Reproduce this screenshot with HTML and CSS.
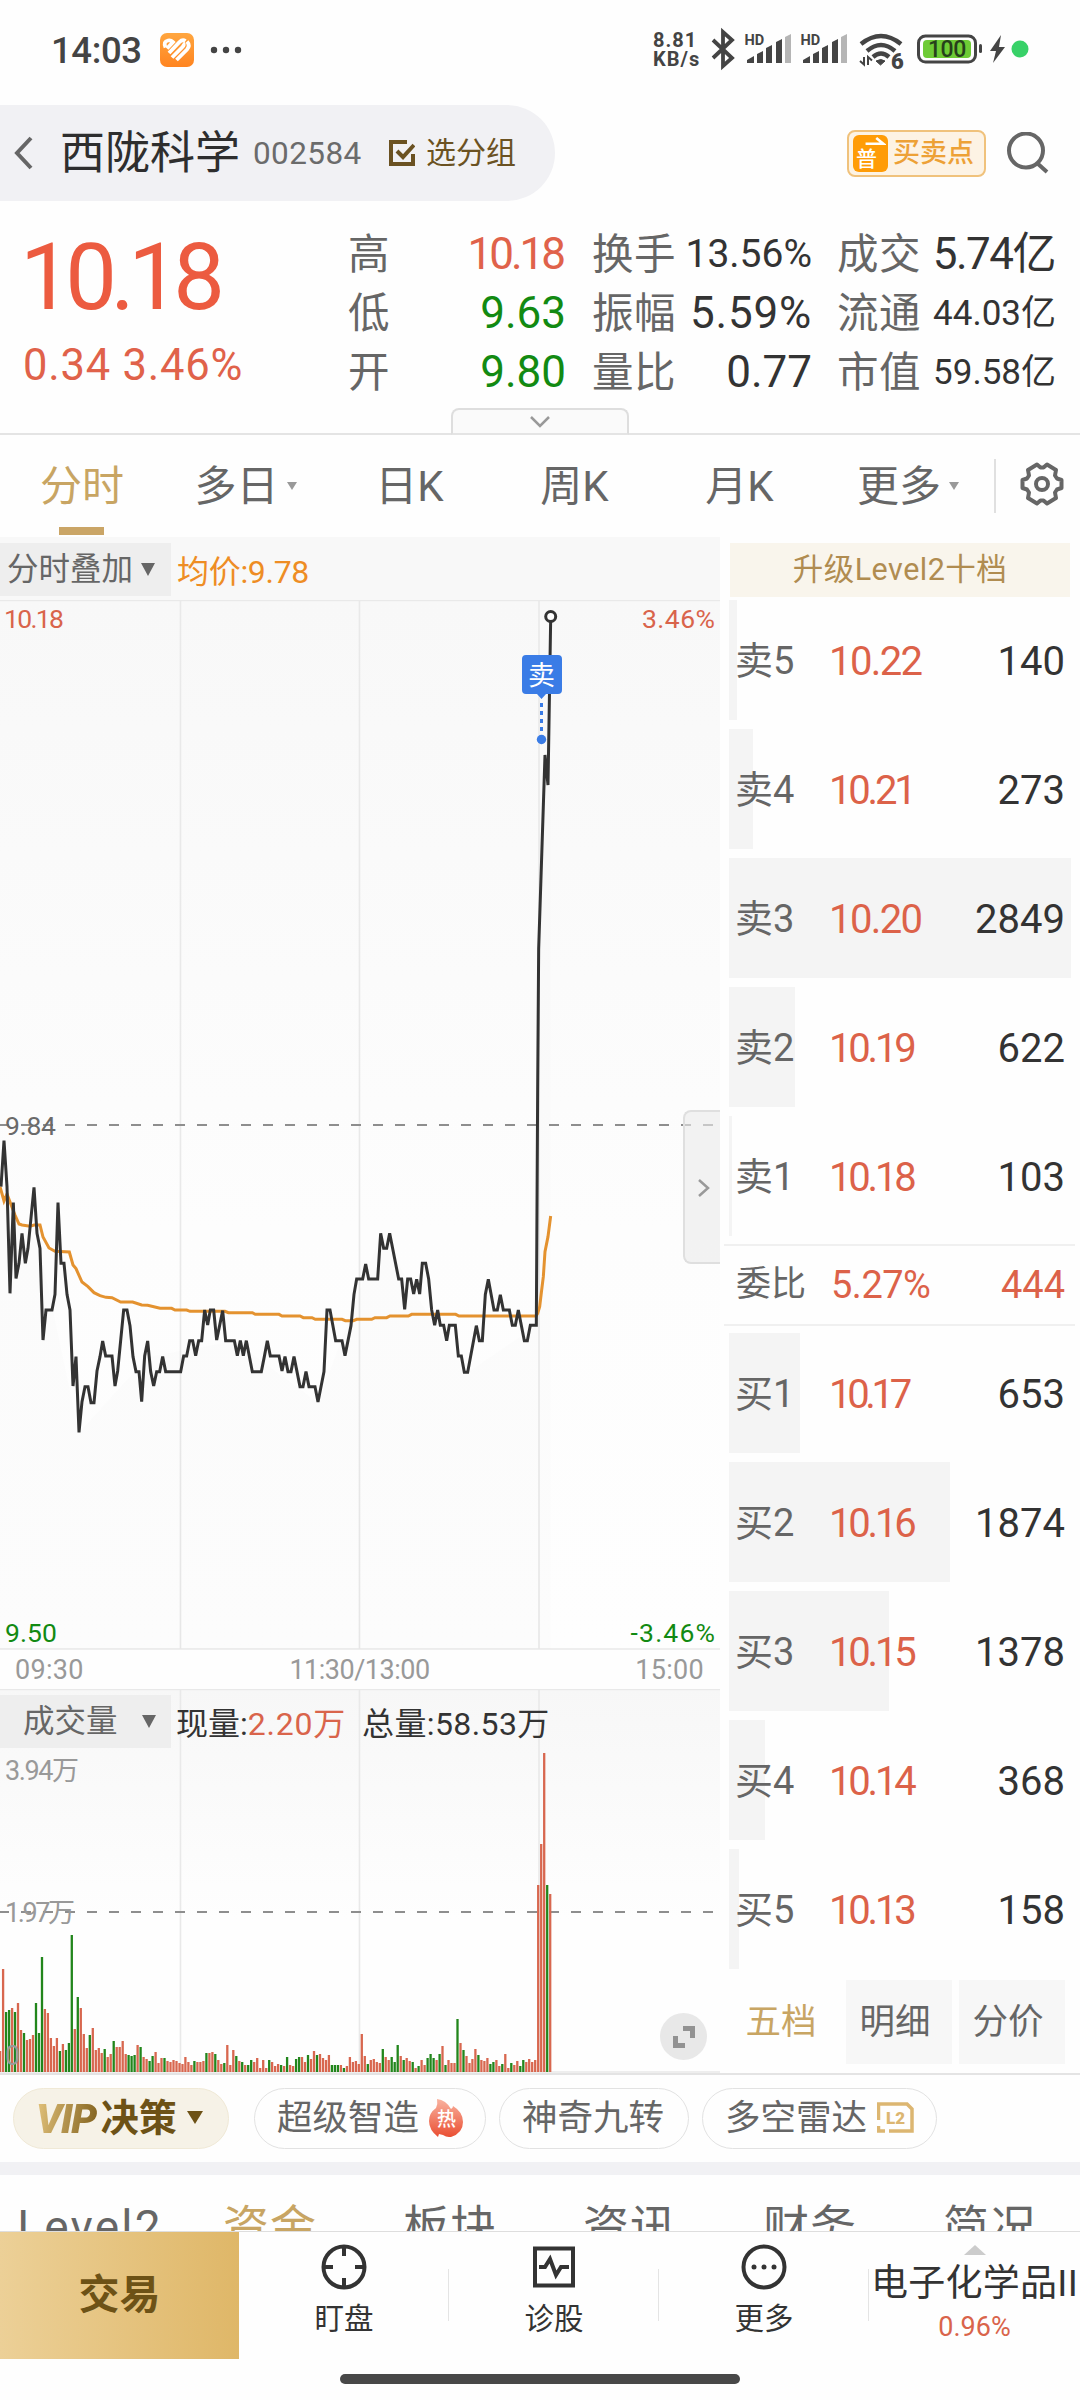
FILE: index.html
```html
<!DOCTYPE html>
<html lang="zh-CN">
<head>
<meta charset="utf-8">
<title>西陇科学 002584</title>
<link rel="stylesheet" href="styles.css">
</head>
<body>
<div class="status">
  <span class="clock">14:03</span>
  <svg class="app-icon" viewBox="0 0 34 34"><defs><linearGradient id="og" x1="0" y1="0" x2="0" y2="1"><stop offset="0" stop-color="#ffa63f"/><stop offset="1" stop-color="#ff8420"/></linearGradient></defs><rect width="34" height="34" rx="7" fill="url(#og)"/><g fill="none" stroke="#fff" stroke-width="3.800"><path d="M5.500 14.500Q3 8.500 8 7.500q3-.5 5 1.500L7 15.500"/><path d="M9 20 19.500 9q3-3 6-1"/><path d="M12 24.500 22 14.500q3-3 1-4.500"/><path d="M16.500 27 27 16.500q3.500-4 0-8"/></g></svg>
  <svg class="dots" viewBox="0 0 32 8"><circle cx="4" cy="4" r="3.2"/><circle cx="16" cy="4" r="3.2"/><circle cx="28" cy="4" r="3.2"/></svg>
  <div class="speed"><span>8.81</span><span>KB/s</span></div>
  <svg class="status-icons" viewBox="705 28 330 46">
    <path d="M713 41l19 18-9 8V33l9 8-19 18" fill="none" stroke="#444" stroke-width="3.8"/>
    <g id="sig"><text x="744.500" y="46" class="hd">HD</text><path d="M747 64v-3l7-4v7zM757 64V55l6-3v12zM766 64V49l6-3v18zM776 64V43l6-3v24z" fill="#444"/><path d="M785 64V38l6-3v29z" fill="#b5b5b5"/></g>
    <use href="#sig" x="56"/>
    <g fill="none" stroke="#444" stroke-width="4.4"><path d="M861 45q20-16 40 0M867 52q14-12 28 0M873 58q8-7 16 0"/></g>
    <path d="M876 62q5-3 9 0l-4.500 4z" fill="#444" stroke="#444"/>
    <path d="M860 62l4 3.500V58M868 66v-8l4 3.500" fill="none" stroke="#444" stroke-width="2"/>
    <text x="891" y="69.500" class="six">6</text>
    <rect x="918.500" y="37" width="57" height="26" rx="7" fill="none" stroke="#444" stroke-width="3"/><rect x="923" y="41" width="48" height="18" rx="4" fill="#6ecb35"/><rect x="979" y="45" width="3" height="9" rx="1.500" fill="#444"/>
    <text x="928" y="58" class="bat">100</text>
    <path d="M1001 36l-11 16h6l-3 12 12-16h-6z" fill="#444"/><circle cx="1020" cy="50" r="8.500" fill="#38d168"/>
  </svg>
</div>

<header class="header">
  <div class="stock">
    <svg class="back" viewBox="0 0 20 34"><path d="M17 2 3 17l14 15"/></svg>
    <h1>西陇科学</h1><span class="code">002584</span>
    <svg class="check" viewBox="0 0 26 26"><path d="M18 2H2v22h22V14"/><path d="m8 11 6 6L25 5"/></svg>
    <span class="group">选分组</span>
  </div>
  <div class="trade-points">
    <span class="pu"><svg viewBox="0 0 36 14"><path d="M13 9.500h20L25 3" fill="none" stroke="#fff" stroke-width="3"/></svg>普</span>
    <span>买卖点</span>
  </div>
  <svg class="search" viewBox="0 0 42 42"><circle cx="19" cy="18.500" r="17"/><path d="m30 31 10 9"/></svg>
</header>

<section class="quote">
  <div class="price"><strong>10.18</strong><span>0.34 3.46%</span></div>
  <dl class="stats">
    <dt>高</dt><dd class="red t3">10.18</dd><dt>换手</dt><dd class="s39">13.56%</dd><dt>成交</dt><dd class="t2">5.74亿</dd>
    <dt>低</dt><dd class="green">9.63</dd><dt>振幅</dt><dd class="wide">5.59%</dd><dt>流通</dt><dd class="s35">44.03亿</dd>
    <dt>开</dt><dd class="green">9.80</dd><dt>量比</dt><dd>0.77</dd><dt>市值</dt><dd class="s35">59.58亿</dd>
  </dl>
  <div class="expander"><svg viewBox="0 0 20 12"><path d="m1 1 9 9 9-9"/></svg></div>
</section>

<nav class="periods">
  <span class="on">分时</span><span>多日<i></i></span><span>日K</span><span>周K</span><span>月K</span><span>更多<i></i></span>
  <div class="gear"><svg viewBox="-22 -22 44 44"><path d="M-5-19.500-1.500-16.500h3L5-19.500 14-14l-1 5.500 2 3 4.500 1.500v8L15 5.500l-2 3 1 5.500-9 5.500-3.500-3h-3l-3.500 3-9-5.500 1-5.500-2-3L-19.500 4v-8l4.500-1.500 2-3-1-5.500z"/><circle r="6"/></svg></div>
</nav>

<main class="main">
  <div class="charts">
    <div class="bar"><span class="select">分时叠加<i></i></span><span class="avg">均价:9.78</span></div>
    <div class="plot">
      <svg viewBox="0 0 720 1050">
        <g class="grid"><path d="M0 .5H720M180.500 0V1049M359.500 0V1049M539 0V1049M0 1049H720"/></g>
        <path class="dash" d="M0 525H714"/>
        <g transform="translate(0 490) scale(.33333)">
          <path class="shade" d="M0 290 120 475 237 1027 443 800 703 752 954 936 1142 430 1304 706 1403 847 1609 706 1616-423 1652-1411V1677H0z"/>
          <path class="avgline" d="M0 290 12 333 21 312 36 352 45 375 57 402 66 405 90 409 102 405 120 405 129 441 147 474 165 484 208 486 219 525 228 536 246 576 264 590 282 608 300 617 318 622 336 623 362 636 398 636 425 645 443 646 480 655 515 655 525 660 560 660 570 664 675 664 685 668 757 668 766 673 837 673 846 678 900 678 910 683 936 683 946 688 1026 688 1036 692 1060 692 1070 688 1115 688 1125 683 1160 683 1170 678 1225 678 1235 673 1367 673 1377 678 1608 678 1613 670 1619 650 1625 600 1630 560 1635 485 1644 440 1652 378"/>
          <path class="line" d="M3 290 12 152 21 290 30 610 40 338 48 565 57 520 66 430 76 520 84 475 102 292 111 430 120 475 129 750 138 660 156 660 165 613 174 338 183 520 192 520 201 613 210 660 219 888 228 800 237 1027 246 935 255 890 264 890 273 938 282 938 291 843 300 800 308 753 317 798 336 798 345 888 353 843 371 660 381 660 390 707 399 800 408 845 417 845 425 935 434 798 443 753 452 845 461 888 470 845 479 845 488 800 497 845 542 845 551 798 560 798 569 752 578 752 587 797 596 752 605 752 614 660 623 705 631 660 641 660 650 750 668 662 677 752 703 752 712 797 721 752 730 797 739 752 757 845 784 845 793 800 802 752 811 798 837 798 846 843 855 800 864 845 873 845 882 800 900 890 909 890 918 845 927 890 945 890 954 936 972 845 981 660 990 660 1007 752 1026 752 1035 797 1053 707 1062 613 1070 567 1088 567 1097 522 1106 567 1133 567 1142 430 1151 475 1160 475 1169 430 1196 567 1205 567 1214 658 1223 567 1232 567 1241 612 1250 568 1259 612 1267 520 1277 520 1286 567 1295 660 1304 706 1313 660 1321 706 1331 706 1340 752 1348 706 1366 706 1375 798 1384 798 1393 847 1403 847 1429 707 1438 752 1447 752 1456 613 1465 568 1482 660 1492 660 1501 614 1510 660 1528 660 1537 706 1546 706 1555 660 1573 752 1582 752 1591 706 1609 706 1613 0 1616-423 1635-1005 1644-915 1652-1411"/>
        </g>
        <circle cx="550.700" cy="16.500" r="5" fill="#fff" stroke="#333" stroke-width="3"/>
        <path d="M526 55h32q4 0 4 4v31q0 4-4 4h-12l-4.500 5-4.500-5h-11q-4 0-4-4V59q0-4 4-4z" fill="#3a7ce6"/>
        <path d="M541.500 103v30" stroke="#3a7ce6" stroke-width="3" stroke-dasharray="4 4"/><circle cx="541.500" cy="139.500" r="4.700" fill="#3a7ce6"/>
        <text x="528" y="85" class="sell">卖</text>
        <text x="4" y="28" class="lab red" textLength="60">10.18</text><text x="642" y="28" class="lab red" textLength="73">3.46%</text>
        <text x="5" y="535" class="lab" textLength="51">9.84</text>
        <text x="5" y="1042" class="lab green" textLength="52">9.50</text><text x="630.500" y="1042" class="lab green" textLength="84.500">-3.46%</text>
      </svg>
      <div class="handle"><svg viewBox="0 0 12 18"><path d="m1 1 9 8-9 8"/></svg></div>
    </div>
    <div class="axis"><span>09:30</span><span class="mid">11:30/13:00</span><span>15:00</span></div>
    <div class="volume">
      <svg id="vol" viewBox="0 0 720 384">
        <path class="grid" d="M0 .5H720M180.500 0V383M359.500 0V383M539 0V383M0 383H720"/>
        <path class="dash" d="M0 223H714"/>
        <g id="bars"></g>
        <text x="5" y="91" class="lab g9" textLength="74">3.94万</text><text x="5" y="233" class="lab g9" textLength="70">1.97万</text><text x="5" y="376" class="lab g9">0</text>
      </svg>
      <div class="bar"><span class="select vol">成交量<i></i></span><span class="now">现量:<b>2.20万</b></span><span class="total">总量:58.53万</span></div>
      <div class="full"><svg viewBox="0 0 22 22"><path d="M10 2.500h9.500V12M2.500 10v9.500H12"/></svg></div>
    </div>
  </div>

  <aside class="book">
    <div class="upgrade">升级Level2十档</div>
    <div class="rows">
      <div class="row"><u style="width:8px"></u><span>卖5</span><em class="a">10.22</em><b>140</b></div>
      <div class="row"><u style="width:24px"></u><span>卖4</span><em class="b">10.21</em><b>273</b></div>
      <div class="row"><u style="width:342px"></u><span>卖3</span><em class="a">10.20</em><b>2849</b></div>
      <div class="row"><u style="width:66px"></u><span>卖2</span><em class="b">10.19</em><b>622</b></div>
      <div class="row"><u style="width:3px"></u><span>卖1</span><em class="b">10.18</em><b>103</b></div>
    </div>
    <div class="ratio"><span>委比</span><em>5.27%</em><b>444</b></div>
    <div class="rows">
      <div class="row"><u style="width:71px"></u><span>买1</span><em class="c">10.17</em><b>653</b></div>
      <div class="row"><u style="width:221px"></u><span>买2</span><em class="b">10.16</em><b>1874</b></div>
      <div class="row"><u style="width:160px"></u><span>买3</span><em class="b">10.15</em><b>1378</b></div>
      <div class="row"><u style="width:36px"></u><span>买4</span><em class="b">10.14</em><b>368</b></div>
      <div class="row"><u style="width:10px"></u><span>买5</span><em class="b">10.13</em><b>158</b></div>
    </div>
    <div class="modes"><span class="on">五档</span><span>明细</span><span>分价</span></div>
  </aside>
</main>

<div class="tools">
  <span class="pill vip"><b>VIP</b>决策<i></i></span>
  <span class="pill p2">超级智造<svg class="flame" viewBox="0 0 34 38"><defs><linearGradient id="fg" x1="0" y1="0" x2="0" y2="1"><stop offset="0" stop-color="#f9b3a0"/><stop offset="1" stop-color="#ea4f33"/></linearGradient></defs><path d="M8 0q9 1 14 10 2-1 2-3 10 6 10 16 0 11-12 15H20q-3 0-6-2l-4-1-1 3Q0 31 0 22q0-8 7-13 2-4 1-9z" fill="url(#fg)"/><text x="8" y="27">热</text></svg></span>
  <span class="pill p3">神奇九转</span>
  <span class="pill p4">多空雷达<svg class="l2" viewBox="0 0 37 31"><path d="M1.500 18V2H30l5 5v22H12M1.500 24v5H8" fill="none" stroke="#dcb671" stroke-width="3.500"/><text x="9" y="22">L2</text></svg></span>
</div>
<div class="band"></div>
<nav class="sections"><span class="lv">Level2</span><span class="on">资金</span><span>板块</span><span>资讯</span><span>财务</span><span>简况</span></nav>

<footer class="bottom">
  <div class="trade">交易</div>
  <div class="item"><svg viewBox="0 0 46 46"><circle cx="23" cy="23" r="20.500"/><path d="M23 3v9M23 34v9M3 23h9M34 23h9"/></svg>盯盘</div>
  <div class="item"><svg viewBox="0 0 46 46"><path d="M4 4.500h38v37H4zM8 23h6l5-8 6 16 5-8h8"/></svg>诊股</div>
  <div class="item"><svg viewBox="0 0 46 46"><circle cx="23" cy="23" r="20.500"/><g class="fill"><circle cx="13" cy="23" r="2.500"/><circle cx="23" cy="23" r="2.500"/><circle cx="33" cy="23" r="2.500"/></g></svg>更多</div>
  <div class="industry"><i></i><span>电子化学品II</span><em>0.96%</em></div>
</footer>
<div class="home"><i></i></div>
<script src="volume.js"></script>
</body>
</html>
```
FILE: styles.css
```css
* { box-sizing: border-box; margin: 0; padding: 0; }
body { width: 1080px; height: 2400px; overflow: hidden; background: #fefefe; color: #333; font-family: Roboto, "Noto Sans CJK SC", sans-serif; display: flex; flex-direction: column; }
body > * { flex: none; }
i, em { font-style: normal; }
b, strong { font-weight: 400; }
svg { display: block; flex: none; }
span, dt, dd, em, b { white-space: nowrap; }
.red { color: #e0624a; fill: #d9644b; }
.green { color: #128a12; fill: #128a12; }

.status { height: 105px; padding: 0 45px 5px 51px; display: flex; align-items: center; }
.clock { width: 109px; font-size: 36.500px; font-weight: 500; color: #444; letter-spacing: -.4px; }
.app-icon { width: 34px; height: 34px; margin-right: 16px; }
.dots { width: 32px; height: 8px; fill: #444; }
.speed { margin-left: auto; width: 52px; display: flex; flex-direction: column; font-size: 20px; line-height: 19px; font-weight: 700; color: #444; letter-spacing: 1px; }
.status-icons { width: 330px; height: 46px; }
.hd { font-size: 14.500px; font-weight: 700; fill: #444; }
.six { font-size: 22px; font-weight: 900; fill: #444; }
.bat { font-size: 23px; font-weight: 500; fill: #26401b; letter-spacing: -.5px; }

.header { height: 96px; display: flex; align-items: center; }
.stock { width: 555px; height: 96px; background: #f1f1f4; border-radius: 0 48px 48px 0; display: flex; align-items: center; padding-left: 14px; }
.back { width: 20px; height: 34px; fill: none; stroke: #666; stroke-width: 4; margin-right: 26px; }
h1 { font-size: 45px; line-height: 60px; font-weight: 400; width: 193px; color: #2e2e2e; padding-top: 1px; }
.code { font-size: 31.500px; width: 136px; color: #6b6b6b; letter-spacing: .4px; }
.check { width: 26px; height: 26px; fill: none; stroke: #6b5222; stroke-width: 4; margin-right: 11px; }
.group { font-size: 30px; line-height: 40px; color: #6b5222; padding-bottom: 1px; }
.trade-points { margin-left: 292px; width: 139px; height: 47px; border: 2px solid #f0c27c; border-radius: 8px; background: #fdf3e4; display: flex; align-items: center; gap: 5px; padding-left: 4px; font-size: 27px; color: #eda136; line-height: 40px; font-weight: 500; }
.pu { width: 35px; height: 37px; border-radius: 6px; background: #ff9c07; color: #fff; font-size: 21px; line-height: 22px; padding-left: 3px; }
.pu svg { width: 32px; height: 13px; margin-left: -2px; }
.search { width: 42px; height: 42px; margin-left: 21px; fill: none; stroke: #666; stroke-width: 4; }

.quote { height: 234px; border-bottom: 2px solid #e4e4e4; position: relative; display: flex; }
.price { width: 348px; padding: 23px 0 0 20px; display: flex; flex-direction: column; color: #e0624a; }
.price strong { font-size: 92px; line-height: 108px; letter-spacing: -6.500px; color: #ec5b40; }
.price span { font-size: 43.500px; line-height: 52px; margin-top: 8px; letter-spacing: .8px; padding-left: 3px; }
.stats { display: grid; padding-top: 23.500px; grid-template-rows: repeat(3, 59.300px); grid-template-columns: 80px 138px 107px 139px 90px 154px; height: 200px; }
.stats dt { font-size: 41.500px; line-height: 59px; color: #666; letter-spacing: .5px; }
.stats dt:nth-of-type(3n+2) { padding-left: 26px; }
.stats dt:nth-of-type(3n) { padding-left: 25px; }
.stats dd { font-size: 44px; line-height: 59px; display: flex; justify-content: flex-end; }
.stats .t3 { letter-spacing: -3px; padding-right: 3px; }
.stats .t2 { letter-spacing: -1.500px; padding-right: 1px; }
.stats .wide { letter-spacing: .8px; }
.stats .s39 { font-size: 39px; }
.stats .s35 { font-size: 35px; }
.expander { position: absolute; left: 451px; bottom: -2px; width: 178px; height: 27px; border: 2px solid #dedede; border-bottom-color: #e4e4e4; border-radius: 8px 8px 0 0; background: #fafafa; display: flex; justify-content: center; padding-top: 6px; }
.expander svg { width: 20px; height: 12px; fill: none; stroke: #999; stroke-width: 2.500; }

.periods { height: 102px; display: grid; grid-template-columns: 164px 163px 165px 165px 165px 172px 86px; font-size: 42px; line-height: 103px; color: #666; }
.periods span { text-align: center; position: relative; }
.periods span.on { color: #c8a563; }
.periods span.on::after { content: ""; position: absolute; left: 59px; top: 92px; width: 45px; height: 8px; background: #caa566; }
.periods i { display: inline-block; border: 5.500px solid transparent; border-top: 8px solid #999; border-bottom: 0; margin-left: 8px; vertical-align: 11px; }
.gear { border-left: 2px solid #e0e0e0; height: 54px; margin-top: 24px; padding: 3px 0 0 23px; }
.gear svg { width: 46px; height: 44px; fill: none; stroke: #666; stroke-width: 4; stroke-linejoin: round; }

.main { height: 1536px; display: flex; }
.charts { width: 720px; background: #f8f8f8; }
.bar { height: 63px; display: flex; align-items: center; padding-top: 1px; font-size: 32px; }
.select { width: 171px; height: 53px; background: #eee; color: #666; font-size: 31.500px; line-height: 53px; padding-left: 7px; margin-right: 6px; display: flex; align-items: center; }
.select i, .vip i { border: 7px solid transparent; border-top: 13px solid #666; border-bottom: 0; margin-left: 8px; }
.avg { color: #ee8d24; letter-spacing: -.3px; }
.plot { height: 1050px; position: relative; background: linear-gradient(#f8f8f8, #fdfdfd 60%, #fefefe); }
.plot > svg { width: 720px; height: 1050px; }
.grid { fill: none; stroke: #e9e9e9; stroke-width: 1.600; }
.dash { stroke: #8e8e8e; stroke-width: 2; stroke-dasharray: 10 12; stroke-dashoffset: 1; }
.shade { fill: rgba(0,0,0,.008); }
.avgline { fill: none; stroke: #e4922f; stroke-width: 9; }
.line { fill: none; stroke: #333; stroke-width: 9; }
.sell { font-size: 27px; fill: #fff; }
.lab { font-size: 26.500px; }
.lab:not(.red):not(.green) { fill: #6a6a6a; }
.lab.g9:not(.red) { fill: #999; font-size: 27px; }
.handle { position: absolute; right: 0; top: 510px; width: 37px; height: 154px; border: 2px solid #dfdfdf; border-right: 0; border-radius: 8px 0 0 8px; background: rgba(235,235,235,.6); padding: 67px 0 0 13px; }
.handle svg { width: 12px; height: 18px; fill: none; stroke: #999; stroke-width: 2.500; }
.axis { height: 39px; background: #fefefe; display: flex; justify-content: space-between; align-items: center; padding: 0 16px 0 15px; color: #999; font-size: 27px; letter-spacing: .3px; }
.axis .mid { letter-spacing: -.5px; }
.volume { height: 384px; position: relative; background: linear-gradient(#f7f7f7, #fefefe 60%); }
.volume > svg { position: absolute; left: 0; top: 0; width: 720px; height: 384px; }
.volume .bar { position: relative; height: 64px; padding-top: 0; }
.select.vol { padding-left: 23px; }
.select.vol i { margin-left: 24px; }
.now { width: 186px; margin-left: -1px; }
.now b { color: #d9644b; letter-spacing: .8px; }
.total { letter-spacing: .4px; }
.full { position: absolute; left: 660px; top: 324px; width: 47px; height: 47px; border-radius: 50%; background: #e8e8e8; padding: 12.500px; }
.full svg { width: 22px; height: 22px; fill: none; stroke: #929292; stroke-width: 5; }

.book { width: 360px; padding: 6px 5px 0 4px; }
.upgrade { height: 54px; margin: 0 5px 3px 6px; background: #f9f5ec; color: #b08c50; text-align: center; font-size: 30.500px; line-height: 54px; letter-spacing: .5px; }
.rows { padding: 0 4px 0 5px; display: flex; flex-direction: column; gap: 9px; }
.row { height: 120px; position: relative; display: flex; align-items: center; font-size: 40px; padding: 3px 6px 0 6px; }
.row u { position: absolute; left: 0; top: 0; height: 120px; background: #f4f4f4; }
.row span, .row em, .row b { position: relative; line-height: 60px; }
.row span { width: 94px; color: #666; font-size: 38px; padding-bottom: 1px; }
.row em, .ratio em { color: #dc6249; }
.row b, .ratio b { margin-left: auto; }
em.a { letter-spacing: -1.600px; }
em.b { letter-spacing: -3.200px; }
em.c { letter-spacing: -4.300px; }
.ratio { height: 82px; margin: 8px 0 7px; border: 2px solid #f0f0f0; border-width: 2px 0; display: flex; align-items: center; font-size: 38px; line-height: 60px; padding: 0 10px 0 12px; }
.ratio span { font-size: 35px; color: #666; width: 95px; }
.ratio em { letter-spacing: -.5px; }
.ratio b { color: #dc6249; }
.modes { display: grid; grid-template-columns: 108px 106px 106px; gap: 7px; padding: 11px 0 0 7px; }
.modes span { height: 84px; background: #f7f7f7; text-align: center; line-height: 84px; font-size: 35.500px; color: #666; padding-right: 8px; }
.modes .on { background: none; color: #c8a563; }

.tools { height: 89px; border-top: 2px solid #e4e4e4; display: flex; padding: 13px 0 0 13px; }
.pill { height: 61px; border: 1.500px solid #e2e2e2; border-radius: 31px; font-size: 35.500px; line-height: 54px; color: #666; display: flex; align-items: center; padding: 0 0 2px 22px; }
.vip { width: 216px; background: #f6f2e7; border-color: #f0e9d6; color: #6d5216; font-weight: 700; margin-right: 25px; font-size: 38px; }
.vip b { font-weight: 900; font-style: italic; font-size: 41px; letter-spacing: -1.500px; margin-right: 2px; padding: 2px 3px 0 0; background: linear-gradient(100deg, #e6c67f, #7b5b17); -webkit-background-clip: text; background-clip: text; color: transparent; }
.vip i { border-top-color: #6d5216; border-left-width: 8px; border-right-width: 8px; margin-left: 10px; }
.p2 { width: 232px; margin-right: 13px; }
.p3 { width: 190px; margin-right: 13px; }
.p4 { width: 235px; }
.flame { width: 34px; height: 38px; margin-left: 10px; }
.flame text { font-size: 19px; fill: #fff; font-weight: 500; }
.l2 { width: 37px; height: 31px; margin-left: 10px; }
.l2 text { font-size: 17px; font-weight: 900; fill: #dcb671; }
.band { height: 13px; background: #f1f1f4; }
.sections { height: 56px; overflow: hidden; display: grid; grid-template-columns: repeat(6, 180px); text-align: center; font-size: 46px; line-height: 105px; color: #666; letter-spacing: 1px; }
.sections .lv { letter-spacing: 2.200px; }
.sections .on { color: #c8a563; }

.bottom { height: 128px; border-top: 1.500px solid #dedede; display: flex; background: #fefefe; }
.trade { width: 239px; height: 127px; background: linear-gradient(90deg, #ecd097, #dfb768); font-size: 41px; font-weight: 700; color: #6d5216; text-align: center; line-height: 127px; }
.item { width: 210px; display: flex; flex-direction: column; align-items: center; font-size: 29.500px; line-height: 40px; padding-top: 12px; position: relative; gap: 9px; }
.item::after { content: ""; position: absolute; right: 0; top: 37px; height: 52px; width: 1.500px; background: #e4e4e4; }
.item svg { width: 46px; height: 46px; fill: none; stroke: #333; stroke-width: 4; }
.item .fill { fill: #333; stroke: none; }
.industry { width: 211px; display: flex; flex-direction: column; align-items: center; padding-top: 13px; }
.industry i { border: 11px solid transparent; border-bottom: 10px solid #ccc; border-top: 0; }
.industry span { font-size: 37px; line-height: 52px; letter-spacing: .3px; padding-top: 3px; }
.industry em { font-size: 27px; line-height: 38px; color: #d9644b; margin-top: -2px; }
.home { height: 41px; display: flex; justify-content: center; padding-top: 15px; }
.home i { width: 400px; height: 10px; border-radius: 5px; background: #484848; }
```
FILE: volume.js
```js
// Per-minute volume bar heights; a negative number is a falling minute.
var minutes = [
  21,103,-60,-62,64,-60,69,42,-39,32,33,37,-69,-39,-115,63,59,34,26,34,-21,28,-22,-29,-137,43,-75,64,38,24,
  -37,44,22,24,19,-23,15,18,-31,25,25,31,18,-17,-16,-17,27,-25,15,13,-11,-16,20,9,14,-14,11,10,12,11,
  9,8,15,10,7,-11,10,10,11,-19,19,20,-18,12,8,-9,27,7,22,-16,11,-10,7,-7,-12,10,14,4,12,4,
  -12,10,6,8,-7,6,-15,7,6,-13,-15,15,10,-17,13,21,-17,18,14,12,17,-7,-7,-7,7,-4,6,15,10,11,
  8,38,16,-8,12,13,10,9,-23,15,12,-15,-10,-27,16,-12,14,11,-10,4,-6,12,7,-14,-18,-14,12,-18,26,-7,
  12,9,9,-53,29,-22,16,9,13,23,-17,12,11,14,-8,-10,12,6,-8,18,4,-9,7,11,-6,-12,10,13,10,12,
  187,228,319,-187,178
];
var paths = ["", ""];
minutes.forEach(function (v, i) {
  var x = (i * 2.9895 + 0.1).toFixed(1);
  paths[v < 0 ? 1 : 0] += "M" + x + " 383v-" + Math.abs(v);
});
document.getElementById("bars").innerHTML =
  '<path d="' + paths[0] + '" stroke="#d8674f" stroke-width="2.3"/>' +
  '<path d="' + paths[1] + '" stroke="#22861c" stroke-width="2.3"/>';
```
